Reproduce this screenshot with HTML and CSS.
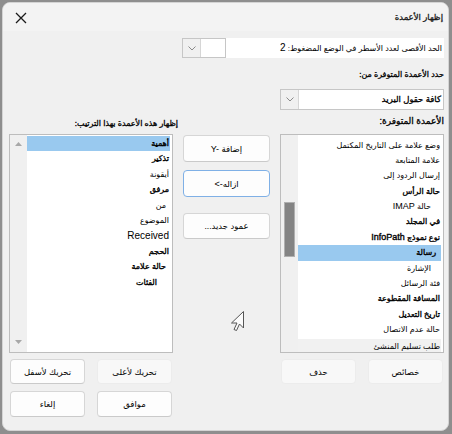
FILE: index.html
```html
<!DOCTYPE html>
<html lang="ar" dir="rtl">
<head>
<meta charset="utf-8">
<title>إظهار الأعمدة</title>
<link rel="stylesheet" href="styles.css">
</head>
<body>
<div class="window">
  <div class="titlebar">
    <span class="title">إظهار الأعمدة</span>
    <svg class="close" width="12" height="12" viewBox="0 0 12 12"><path d="M1 1L11 11M11 1L1 11" stroke="#1a1a1a" stroke-width="1.3" fill="none"/></svg>
  </div>
  <div class="content">
    <div class="row-max">
      <div class="max-label">الحد الأقصى لعدد الأسطر في الوضع المضغوط: <span class="lat">2</span></div>
      <div class="combo combo-small">
        <div class="combo-field"></div>
        <div class="combo-btn"><svg width="8" height="5" viewBox="0 0 8 5"><path d="M0.5 0.5L4 4L7.5 0.5" stroke="#8a8a8a" fill="none"/></svg></div>
      </div>
    </div>
    <div class="label-from">حدد الأعمدة المتوفرة من:</div>
    <div class="combo combo-wide">
      <div class="combo-field">كافة حقول البريد</div>
      <div class="combo-btn"><svg width="8" height="5" viewBox="0 0 8 5"><path d="M0.5 0.5L4 4L7.5 0.5" stroke="#8a8a8a" fill="none"/></svg></div>
    </div>

    <div class="main">
      <div class="col-label label-avail">الأعمدة المتوفرة:</div>
      <div class="col-label"></div>
      <div class="col-label label-show">إظهار هذه الأعمدة بهذا الترتيب:</div>

      <div class="listbox">
        <ul class="items">
          <li>وضع علامة على التاريخ المكتمل</li>
          <li>علامة المتابعة</li>
          <li>إرسال الردود إلى</li>
          <li class="b">حالة الرأس</li>
          <li class="in10">حالة <span class="lat sm">IMAP</span></li>
          <li class="b">في المجلد</li>
          <li class="b">نوع نموذج <span class="lat sm">InfoPath</span></li>
          <li class="b sel in5">رسالة</li>
          <li class="in10">الإشارة</li>
          <li>فئة الرسائل</li>
          <li class="b">المسافة المقطوعة</li>
          <li class="b">تاريخ التعديل</li>
          <li>حالة عدم الاتصال</li>
          <li class="last">طلب تسليم المنشئ</li>
        </ul>
        <div class="scroll">
          <div class="thumb"></div>
        </div>
      </div>

      <div class="middle">
        <button class="btn">إضافة <span class="lat sm" dir="ltr">Y-</span></button>
        <button class="btn focus">ازاله<span class="lat sm" dir="ltr">&lt;-</span></button>
        <button class="btn btn-new">عمود جديد...</button>
      </div>

      <div class="listbox">
        <ul class="items items-left">
          <li class="b sel">أهمية</li>
          <li class="b">تذكير</li>
          <li>أيقونة</li>
          <li class="b">مرفق</li>
          <li class="in4">من</li>
          <li>الموضوع</li>
          <li><span class="lat">Received</span></li>
          <li class="b">الحجم</li>
          <li class="b in4">حالة علامة</li>
          <li class="b in13">الفئات</li>
        </ul>
        <div class="scroll scroll-arrows">
          <svg width="7" height="4" viewBox="0 0 7 4"><path d="M0 4L3.5 0L7 4Z" fill="#a8a8a8"/></svg>
          <svg width="7" height="4" viewBox="0 0 7 4"><path d="M0 0L3.5 4L7 0Z" fill="#a8a8a8"/></svg>
        </div>
      </div>

      <div class="btn-pair pair-right">
        <button class="btn btn-dim">خصائص</button>
        <button class="btn btn-dim">حذف</button>
      </div>
      <div class="btn-pair pair-left">
        <button class="btn btn-dim">تحريك لأعلى</button>
        <button class="btn">تحريك لأسفل</button>
      </div>
      <div class="btn-pair pair-last">
        <button class="btn">موافق</button>
        <button class="btn">إلغاء</button>
      </div>
    </div>
  </div>
  <svg class="cursor" width="16" height="22" viewBox="0 0 16 22"><path d="M14.5 0.5L14.5 17L10.5 13L7.5 19.5L5 18.5L8 12L2.5 12Z" fill="#fbfbfb" stroke="#555" stroke-width="1" stroke-linejoin="round"/></svg>
</div>
</body>
</html>
```

FILE: styles.css
```css
html, body {
  margin: 0;
  padding: 0;
}
body {
  background: #8e8e8e;
  width: 452px;
  height: 434px;
  overflow: hidden;
  font-family: "Liberation Sans", "DejaVu Sans", sans-serif;
  font-size: 8px;
  color: #000;
}
.lat {
  font-family: "Liberation Sans", sans-serif;
  font-size: 10px;
}
.lat.sm {
  font-size: 9px;
}
.window {
  position: relative;
  box-sizing: border-box;
  margin: 2px 3px 0 2px;
  width: 447px;
  height: 429px;
  background: #f0f0f0;
  border: 1px solid #d4d4d4;
  border-radius: 8px;
  overflow: hidden;
}
.titlebar {
  height: 28px;
  background: #f3f3f3;
  display: flex;
  align-items: center;
  justify-content: space-between;
  padding: 0 5px 0 12px;
}
.title {
  font-size: 8.5px;
  -webkit-text-stroke: 0.3px #1a1a1a;
  color: #1a1a1a;
}
.close {
  display: block;
  margin-top: 1px;
}
.content {
  padding: 7px 4px 0 6px;
}
.row-max {
  display: flex;
  height: 20px;
}
.max-label {
  width: 218px;
  background: #fff;
  text-align: right;
  line-height: 20px;
  padding-right: 2px;
  box-sizing: border-box;
  white-space: nowrap;
}
.combo {
  display: flex;
  box-sizing: border-box;
  border: 1px solid #c6c6c6;
  background: #fff;
}
.combo-small {
  width: 44px;
  height: 20px;
}
.combo-wide {
  width: 164px;
  height: 21px;
  margin-top: 7px;
}
.combo-field {
  flex: 1;
  background: #fff;
  line-height: 19px;
  padding-right: 2px;
  font-size: 8.5px;
  -webkit-text-stroke: 0.3px #000;
}
.combo-btn {
  width: 17px;
  background: #f0f0f0;
  border-right: 1px solid #d6d6d6;
  display: flex;
  align-items: center;
  justify-content: center;
}
.label-from {
  margin-top: 10px;
  line-height: 14px;
  height: 14px;
  -webkit-text-stroke: 0.3px #000;
}
.main {
  display: grid;
  grid-template-columns: 164px 87px 164px;
  column-gap: 10px;
  grid-template-rows: 24px 219px 25px 26px;
}
.col-label {
  line-height: 14px;
  white-space: nowrap;
  -webkit-text-stroke: 0.3px #000;
}
.label-avail {
  padding-top: 4px;
  font-size: 9px;
}
.label-show {
  padding-top: 7px;
  margin-right: -5px;
}
.listbox {
  box-sizing: border-box;
  border: 1px solid #bdbdbd;
  display: flex;
  background: #fff;
  overflow: hidden;
}
.items {
  list-style: none;
  margin: 0;
  padding: 2.5px 2px 0 0;
  flex: 1;
}
.items-left {
  padding-top: 1px;
}
.items li {
  height: 15.4px;
  line-height: 15.4px;
  white-space: nowrap;
  padding-right: 1px;
}
.items .b {
  -webkit-text-stroke: 0.35px #000;
}
.items .sel {
  background: #99c9ef;
}
.items .last {
  background: #f1f1f1;
  margin-top: 1px;
}
.items .in4 { padding-right: 4px; }
.items .in5 { padding-right: 5px; }
.items .in10 { padding-right: 10px; }
.items .in13 { padding-right: 13px; }
.scroll {
  width: 17px;
  background: #f0f0f0;
  position: relative;
}
.thumb {
  position: absolute;
  left: 3px;
  top: 67px;
  width: 9px;
  height: 53px;
  background: #848484;
  border: 1px solid #b0b0b0;
}
.scroll-arrows {
  display: flex;
  flex-direction: column;
  justify-content: space-between;
  align-items: center;
  padding: 7px 0 8px;
}
.scroll-arrows svg {
  display: block;
}
.middle {
  display: flex;
  flex-direction: column;
  padding-top: 1px;
}
.btn {
  font-family: inherit;
  font-size: 8.5px;
  color: #000;
  box-sizing: border-box;
  background: #fdfdfd;
  border: 1px solid #d6d6d6;
  border-bottom-color: #cacaca;
  border-radius: 4px;
  padding: 0;
  margin: 0;
  white-space: nowrap;
}
.middle .btn {
  height: 27px;
  width: 87px;
  margin-bottom: 8px;
}
.middle .btn.focus {
  border: 1px solid #7fb0e6;
  margin-bottom: 16px;
}
.middle .btn-new {
  height: 26px;
}
.btn-pair {
  display: flex;
  justify-content: space-between;
  padding: 6px 1px 0;
}
.btn-pair .btn {
  width: 75px;
  height: 25px;
}
.pair-right {
  grid-column: 1;
  grid-row: 3;
}
.pair-left {
  grid-column: 3;
  grid-row: 3;
}
.pair-last {
  grid-column: 3;
  grid-row: 4;
  padding-top: 13px;
}
.pair-last .btn {
  height: 26px;
}
.btn-dim {
  background: #f8f8f8;
  border-color: #ececec;
}
.cursor {
  position: absolute;
  left: 226px;
  top: 308px;
}
```
